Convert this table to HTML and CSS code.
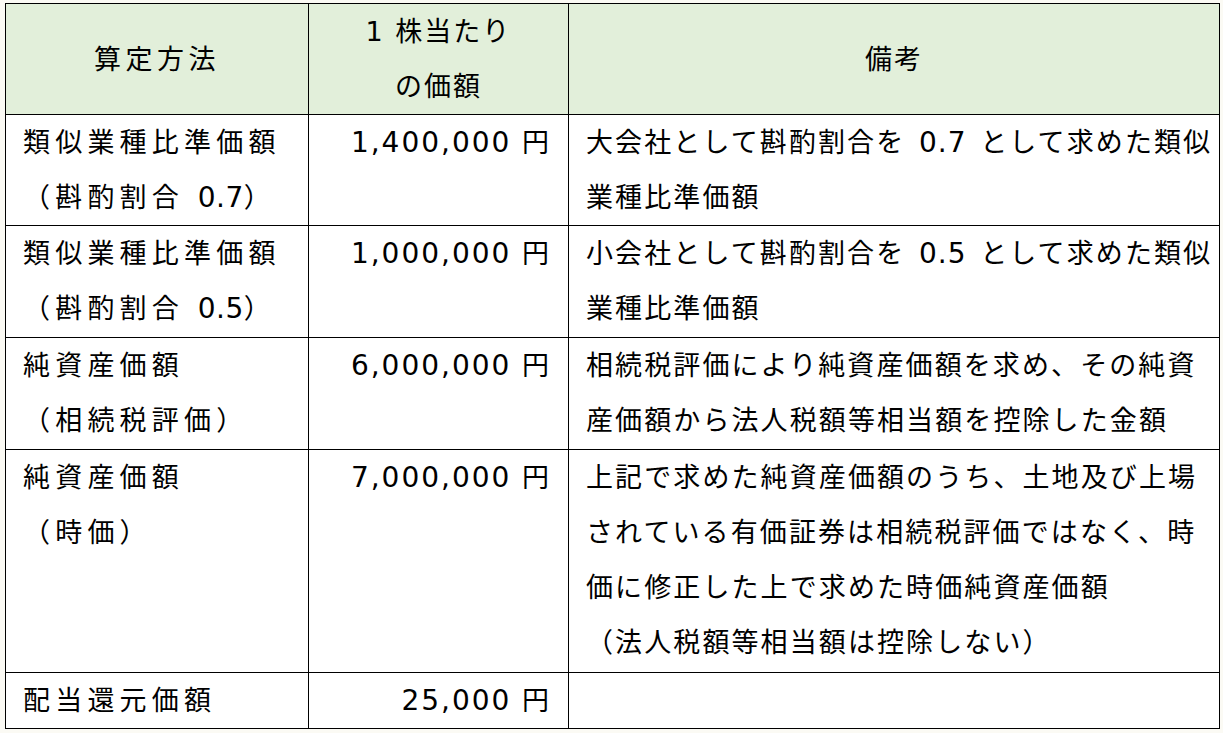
FILE: index.html
```html
<!DOCTYPE html>
<html lang="ja">
<head>
<meta charset="utf-8">
<title>算定方法</title>
<link rel="stylesheet" href="styles.css">
</head>
<body>
<div class="wrap">
<table class="valuation">
  <colgroup>
    <col class="c1">
    <col class="c2">
    <col class="c3">
  </colgroup>
  <thead>
    <tr>
      <th class="method">算定方法</th>
      <th class="price">1 株当たり<br>の価額</th>
      <th class="note">備考</th>
    </tr>
  </thead>
  <tbody>
    <tr class="r2">
      <td class="method">類似業種比準価額<br>（斟酌割合 <span class="num">0.7</span>）</td>
      <td class="price"><span class="num">1,400,000</span> 円</td>
      <td class="note">大会社として斟酌割合を <span class="gap"></span><span class="num">0.7</span> <span class="gap"></span>として求めた類似<br>業種比準価額</td>
    </tr>
    <tr class="r2b">
      <td class="method">類似業種比準価額<br>（斟酌割合 <span class="num">0.5</span>）</td>
      <td class="price"><span class="num">1,000,000</span> 円</td>
      <td class="note">小会社として斟酌割合を <span class="gap"></span><span class="num">0.5</span> <span class="gap"></span>として求めた類似<br>業種比準価額</td>
    </tr>
    <tr class="r2b">
      <td class="method">純資産価額<br>（相続税評価）</td>
      <td class="price"><span class="num">6,000,000</span> 円</td>
      <td class="note">相続税評価により純資産価額を求め、その純資<br>産価額から法人税額等相当額を控除した金額</td>
    </tr>
    <tr class="r4">
      <td class="method">純資産価額<br>（時価）</td>
      <td class="price"><span class="num">7,000,000</span> 円</td>
      <td class="note">上記で求めた純資産価額のうち、土地及び上場<br>されている有価証券は相続税評価ではなく、時<br>価に修正した上で求めた時価純資産価額<br>（法人税額等相当額は控除しない）</td>
    </tr>
    <tr class="r1">
      <td class="method">配当還元価額</td>
      <td class="price"><span class="num">25,000</span> 円</td>
      <td class="note"></td>
    </tr>
  </tbody>
</table>
</div>
</body>
</html>
```
FILE: styles.css
```css
html, body {
  margin: 0;
  padding: 0;
  background: #fbfaf4;
}

.wrap {
  padding: 3px 0 0 5px;
}

.valuation {
  border-collapse: collapse;
  table-layout: fixed;
  width: 1214px;
  background: #ffffff;
  font-family: "DejaVu Sans", "Noto Sans CJK JP", sans-serif;
  font-size: 27px;
  color: #000;
  letter-spacing: 2px;
}

.c1 { width: 303px; }
.c2 { width: 260px; }
.c3 { width: 651px; }

.valuation th,
.valuation td {
  border: 1px solid #000;
  padding: 0;
  line-height: 55px;
  vertical-align: top;
  white-space: nowrap;
  font-weight: normal;
}

.valuation th {
  background: #e2efda;
  text-align: center;
  vertical-align: middle;
  height: 110px;
}

.valuation th.method {
  letter-spacing: 4.5px;
}

.valuation td.method {
  padding-left: 17px;
  letter-spacing: 5.2px;
}

.valuation td.price {
  text-align: right;
  padding-right: 17px;
}

.valuation td.note {
  padding-left: 17px;
  letter-spacing: 2.1px;
}

.num {
  font-size: 28px;
  letter-spacing: 1px;
}

.price .num {
  letter-spacing: 2px;
}

.method .num {
  letter-spacing: 0.5px;
}

.gap {
  display: inline-block;
  width: 3px;
}

.r2 td { height: 110px; }
.r2b td { height: 111px; }
.r4 td { height: 222px; }
.r1 td { height: 54px; }
```
